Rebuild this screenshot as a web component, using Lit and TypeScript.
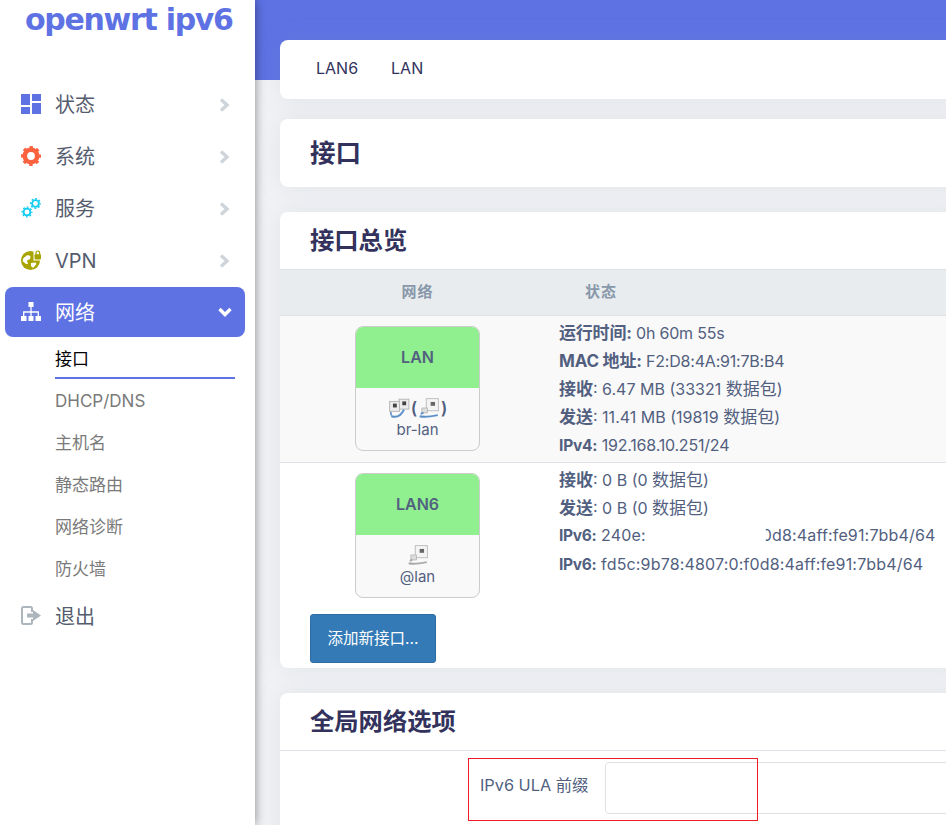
import { LitElement, html, css, svg } from 'lit';
import { customElement } from 'lit/decorators.js';

const chevron = html`<svg class="chev" viewBox="0 0 12 14"><path d="M3 1.500 9 7l-6 5.500" fill="none" stroke="currentColor" stroke-width="3.400"/></svg>`;
const chevronDown = html`<svg class="chev" viewBox="0 0 14 12"><path d="M1.500 3 7 8.500 12.500 3" fill="none" stroke="currentColor" stroke-width="3.400"/></svg>`;

const gear = (cx: number, cy: number, r: number, color: string, ring = 0.46) => {
    // ring plus a dashed stroke for the teeth
    const tr = r * 0.88;
    const dash = (2 * Math.PI * tr) / 16;
    return svg`<circle cx=${cx} cy=${cy} r=${r * 0.62} fill="none" stroke=${color} stroke-width=${r * ring}/>
        <circle cx=${cx} cy=${cy} r=${tr} fill="none" stroke=${color} stroke-width=${r * 0.24} stroke-dasharray="${dash} ${dash}" stroke-dashoffset=${dash / 2}/>`;
};

const icons: Record<string, unknown> = {
    status: html`<svg class="ico" viewBox="0 0 20 20"><path fill="#5e72e4" d="M0 0h9v11H0zM11 0h9v7h-9zM11 9h9v11h-9zM0 13h9v7H0z"/></svg>`,
    system: html`<svg class="ico" viewBox="0 0 20 20">${gear(10, 10, 10, '#fb6340')}</svg>`,
    services: html`<svg class="ico" viewBox="0 0 20 20">${gear(14.500, 5.500, 5.500, '#11cdef', 0.34)}${gear(6, 14, 5.500, '#11cdef', 0.34)}</svg>`,
    vpn: html`<svg class="ico" viewBox="0 0 20 20">
        <circle cx="9.500" cy="10.500" r="9.500" fill="#a8a400"/>
        <path fill="#fff" d="M2.500 8l4-3 3 1-.5 3-3 1.500 1 3.500H5L1.500 11zM10 13l4.500-.5 1 1.500-3.500 4-2-2z"/>
        <path fill="#fff" d="M12.500 0H20v10.500h-7.500z"/>
        <rect x="13.500" y="4.200" width="6.500" height="5.300" rx="1" fill="#a8a400"/>
        <path d="M15 5V2.800a1.800 1.800 0 0 1 3.600 0V5" fill="none" stroke="#a8a400" stroke-width="1.200"/>
    </svg>`,
    network: html`<svg class="ico" viewBox="0 0 20 20"><path fill="#fff" d="M7.500 0h5v5h-5zM0 14h5.500v5H0zM7.500 14h5v5h-5zM14.500 14H20v5h-5.500z"/><path fill="none" stroke="#fff" stroke-width="1.300" d="M10 5v9M2.700 14v-4h14.600v4"/></svg>`,
    logout: html`<svg class="ico" viewBox="0 0 20 20"><path fill="none" stroke="#adb5bd" stroke-width="2" d="M11 6V2.500a1.500 1.500 0 0 0-1.500-1.500h-7A1.500 1.500 0 0 0 1 2.500v14A1.500 1.500 0 0 0 2.500 18h7a1.500 1.500 0 0 0 1.500-1.500V13"/><path fill="#adb5bd" d="M6 7.500h6V4l8 5.500-8 5.500v-3.500H6z"/></svg>`,
};

const ethIcon = (cable: string) => html`<svg class="port" viewBox="0 0 20 20">
    <rect x="7.500" y="1.500" width="11" height="11" fill="#f4f4f4" stroke="#b8b8b8" stroke-width=".8"/>
    <rect x="11.500" y="4.500" width="4" height="3.500" fill="#666"/>
    <rect x="3.500" y="10" width="5" height="4.500" fill="#ddd" stroke="#aaa" stroke-width=".6"/>
    <path d="M1.500 17.500c5 1.300 10 .3 16.500-1" fill="none" stroke=${cable} stroke-width="1.800"/>
    <path d="M2.500 15.500 5 14" stroke=${cable} stroke-width="1.600"/>
</svg>`;

const bridgeIcon = html`<svg class="port" viewBox="0 0 20 20">
    <rect x="10" y="2" width="9" height="9" fill="#ececec" stroke="#b0b0b0" stroke-width=".8"/>
    <rect x="13" y="4" width="3.500" height="3.500" fill="#444"/>
    <rect x="1.500" y="4" width="9" height="9" fill="#ececec" stroke="#b0b0b0" stroke-width=".8"/>
    <rect x="4.500" y="6" width="3.500" height="3.500" fill="#444"/>
    <path d="M3 17.500c5 1.500 9-.5 11.500-6" fill="none" stroke="#5a8fc8" stroke-width="1.800"/>
    <path d="M2.500 13.500 3 17" stroke="#5a8fc8" stroke-width="1.400"/>
</svg>`;

const menu = [
    { key: 'status', label: '状态' },
    { key: 'system', label: '系统' },
    { key: 'services', label: '服务' },
    { key: 'vpn', label: 'VPN' },
];
const subMenu = ['DHCP/DNS', '主机名', '静态路由', '网络诊断', '防火墙'];

@customElement('app-root')
export class AppRoot extends LitElement {
    static styles = css`
        :host {
            display: flex;
            height: 825px;
            overflow: hidden;
            font-family: Inter, "Noto Sans CJK SC", sans-serif;
            color: #525f7f;
            background: #f1f2f5;
        }
        .side {
            width: 255px;
            flex: none;
            background: #fff;
            box-shadow: 0 0 10px rgba(0,0,0,0.45);
            position: relative;
            z-index: 2;
        }
        .logo {
            height: 78px;
            box-sizing: border-box;
            padding-left: 25px;
            font: bold 30px/40px "DejaVu Sans", sans-serif;
            color: #5e72e4;
            white-space: nowrap;
            letter-spacing: -1.300px;
        }
        .item {
            display: flex;
            align-items: center;
            height: 52px;
            padding: 0 25px 0 21px;
            font-size: 20px;
            color: #555c6e;
        }
        .item .ico { width: 20px; height: 20px; margin-right: 14px; flex: none; }
        .item span { flex: 1; padding-bottom: 2px; }
        .item .vpn { padding: 1px 0 0; }
        .chev { width: 12px; height: 14px; margin-top: 2px; color: #ced4da; }
        .item.active {
            height: 50px;
            margin: 1px 10px 1px 5px;
            padding: 0 13px 0 16px;
            background: #5e72e4;
            color: #fff;
            border-radius: 8px;
        }
        .item.active .chev { color: #fff; width: 14px; margin-top: 0; }
        .sub {
            display: block;
            margin-left: 55px;
            width: 180px;
            height: 42px;
            line-height: 42px;
            font-size: 17px;
            color: #7a7a7a;
        }
        .sub.cur {
            color: #000;
            height: 41px;
            margin-bottom: 1px;
            box-sizing: border-box;
            border-bottom: 2px solid #5e72e4;
        }
        .logout { margin-top: 0; }

        .main {
            flex: 1;
            min-width: 0;
            overflow: hidden;
            padding: 40px 0 0 25px;
            background: linear-gradient(#5e72e4 80px, #f1f2f5 80px);
        }
        .card {
            margin-right: -20px;
            background: #fff;
            border-radius: 8px;
            box-shadow: 0 0 24px rgba(136,152,170,0.15);
        }
        .tabs {
            display: flex;
            gap: 33px;
            height: 59px;
            box-sizing: border-box;
            padding: 0 0 3px 36px;
            align-items: center;
            font-size: 16px;
            color: #32325d;
        }
        .page-title {
            margin-top: 20px;
            margin-bottom: 25px;
            height: 68px;
            line-height: 68px;
            padding-left: 30px;
            font-size: 25.500px;
            font-weight: 700;
            color: #32325d;
        }
        .card-head {
            height: 57px;
            line-height: 57px;
            padding-left: 30px;
            font-size: 24.300px;
            font-weight: 700;
            color: #32325d;
        }
        .overview { height: 456px; }
        .row {
            display: grid;
            grid-template-columns: 275px 1fr;
            border-top: 1px solid #dee2e6;
        }
        .thead {
            height: 45px;
            box-sizing: content-box;
            align-items: center;
            background: #e9ecef;
            color: #8898aa;
            font-size: 15px;
            letter-spacing: 1px;
            font-weight: 700;
            border-bottom: 1px solid #dee2e6;
        }
        .thead div { padding-bottom: 4px; }
        .thead div:first-child { text-align: center; }
        .thead div:last-child { padding-left: 30px; }
        .r1 { height: 146px; background: #f9f9f9; border-top: 0; }
        .r2 { height: 145px; }
        .net { display: flex; justify-content: center; padding-top: 10px; }
        .box {
            width: 125px;
            height: 125px;
            box-sizing: border-box;
            border: 1px solid #ccc;
            border-radius: 8px;
            overflow: hidden;
            background: #f9f9f9;
            text-align: center;
        }
        .box-top {
            height: 61px;
            line-height: 60px;
            background: #90f090;
            font-size: 16px;
            font-weight: 600;
            color: #525f7f;
        }
        .box-icons {
            display: flex;
            justify-content: center;
            align-items: center;
            gap: 1px;
            height: 22px;
            margin-top: 9px;
            font-size: 17px;
            font-weight: 600;
        }
        .port { width: 22px; height: 22px; }
        .box-name { margin-top: 2px; font-size: 15px; line-height: 17px; }
        .info {
            padding: 3px 0 0 4px;
            font-size: 16px;
            letter-spacing: -0.2px;
            line-height: 28px;
            white-space: nowrap;
        }
        .info b { font-weight: 700; font-size: 15.500px; }
        .info .zh { font-size: 17px; }
        .pkt { letter-spacing: 0; }
        .pkt span { font-size: 17px; }
        .ip { letter-spacing: 0.16px; }
        .ip b { letter-spacing: -0.3px; }
        .ip.first { margin-top: -1px; }
        .gap { display: inline-block; width: 116px; }
        .cut { clip-path: inset(0 0 0 4px); display: inline-block; }
        .actions { padding: 7px 0 0 30px; margin-top: -1px; }
        button {
            display: block;
            width: 126px;
            height: 49px;
            padding: 0 0 3px;
            border: 1px solid #2e6da4;
            border-radius: 3px;
            background: #337ab7;
            color: #fff;
            font: 15.500px Inter, "Noto Sans CJK SC", sans-serif;
        }
        .global { margin-top: 25px; height: 200px; position: relative; }
        .global .card-head { border-bottom: 1px solid #dee2e6; }
        .field { display: flex; align-items: center; padding: 11px 0 0 200px; }
        .field label {
            width: 125px;
            padding-bottom: 9px;
            font-size: 16.300px;
            color: #525f7f;
            white-space: nowrap;
        }
        .field input {
            flex: 1;
            height: 52px;
            box-sizing: border-box;
            border: 1px solid #dee2e6;
            border-radius: 4px;
            background: #fff;
        }
        .mark {
            position: absolute;
            left: 188px;
            top: 65px;
            width: 290px;
            height: 63px;
            box-sizing: border-box;
            border: 1px solid #ed1c24;
        }
    `;

    render() {
        return html`
            <aside class="side">
                <div class="logo">openwrt ipv6</div>
                ${menu.map((m) => html`<div class="item">${icons[m.key]}<span class=${m.key}>${m.label}</span>${chevron}</div>`)}
                <div class="item active">${icons.network}<span>网络</span>${chevronDown}</div>
                <div class="sub cur">接口</div>
                ${subMenu.map((s) => html`<div class="sub">${s}</div>`)}
                <div class="item logout">${icons.logout}<span>退出</span></div>
            </aside>
            <main class="main">
                <div class="card tabs"><span>LAN6</span><span>LAN</span></div>
                <div class="card page-title">接口</div>
                <section class="card overview">
                    <div class="card-head">接口总览</div>
                    <div class="row thead"><div>网络</div><div>状态</div></div>
                    <div class="row r1">
                        <div class="net"><div class="box">
                            <div class="box-top">LAN</div>
                            <div class="box-icons">${bridgeIcon}<span>(</span>${ethIcon('#5a8fc8')}<span>)</span></div>
                            <div class="box-name">br-lan</div>
                        </div></div>
                        <div class="info">
                            <div><b class="zh">运行时间:</b> 0h 60m 55s</div>
                            <div><b class="zh">MAC 地址:</b> F2:D8:4A:91:7B:B4</div>
                            <div class="pkt"><b class="zh">接收</b>: 6.47 MB (33321 <span>数据包</span>)</div>
                            <div class="pkt"><b class="zh">发送</b>: 11.41 MB (19819 <span>数据包</span>)</div>
                            <div><b>IPv4:</b> 192.168.10.251/24</div>
                        </div>
                    </div>
                    <div class="row r2">
                        <div class="net"><div class="box">
                            <div class="box-top">LAN6</div>
                            <div class="box-icons">${ethIcon('#aaa')}</div>
                            <div class="box-name">@lan</div>
                        </div></div>
                        <div class="info">
                            <div class="pkt"><b class="zh">接收</b>: 0 B (0 <span>数据包</span>)</div>
                            <div class="pkt"><b class="zh">发送</b>: 0 B (0 <span>数据包</span>)</div>
                            <div class="ip first"><b>IPv6:</b> 240e:<span class="gap"></span><span class="cut">0d8:4aff:fe91:7bb4/64</span></div>
                            <div class="ip"><b>IPv6:</b> fd5c:9b78:4807:0:f0d8:4aff:fe91:7bb4/64</div>
                        </div>
                    </div>
                    <div class="actions"><button>添加新接口...</button></div>
                </section>
                <section class="card global">
                    <div class="card-head">全局网络选项</div>
                    <div class="field"><label>IPv6 ULA 前缀</label><input /></div>
                    <div class="mark"></div>
                </section>
            </main>
        `;
    }
}
